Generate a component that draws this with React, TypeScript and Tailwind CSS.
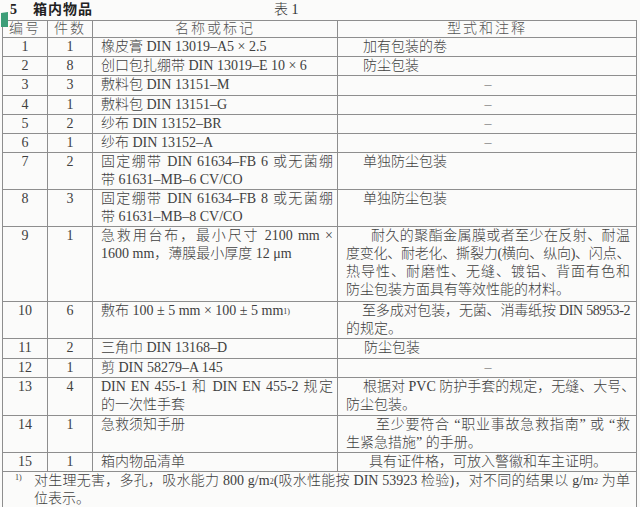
import React from "react";

type Line = { t: React.ReactNode; j?: boolean; indent?: number; tight?: boolean };

const J = ({ lines, lh = 18 }: { lines: Line[]; lh?: number }) => (
  <div>
    {lines.map((l, i) => (
      <div
        key={i}
        className={
          (l.j ? "text-justify [text-align-last:justify] whitespace-nowrap" : "whitespace-nowrap") +
          (l.tight ? " tracking-[-0.4px]" : "")
        }
        style={{ lineHeight: `${lh}px`, paddingLeft: l.indent ?? 0 }}
      >
        {l.t}
      </div>
    ))}
  </div>
);

type Row = {
  no: string;
  qty: string;
  h: number;
  name: Line[];
  note: Line[] | "dash";
};

const Sup = ({ children }: { children: React.ReactNode }) => (
  <sup className="text-[8px] leading-none relative -top-[1px]">{children}</sup>
);

const rows: Row[] = [
  { no: "1", qty: "1", h: 19, name: [{ t: "橡皮膏 DIN 13019–A5 × 2.5" }], note: [{ t: "加有包装的卷", indent: 17 }] },
  { no: "2", qty: "8", h: 19, name: [{ t: "创口包扎绷带 DIN 13019–E 10 × 6" }], note: [{ t: "防尘包装", indent: 17 }] },
  { no: "3", qty: "3", h: 20, name: [{ t: "敷料包 DIN 13151–M" }], note: "dash" },
  { no: "4", qty: "1", h: 19, name: [{ t: "敷料包 DIN 13151–G" }], note: "dash" },
  { no: "5", qty: "2", h: 19, name: [{ t: "纱布 DIN 13152–BR" }], note: "dash" },
  { no: "6", qty: "1", h: 18, name: [{ t: "纱布 DIN 13152–A" }], note: "dash" },
  {
    no: "7",
    qty: "2",
    h: 37,
    name: [{ t: "固定绷带 DIN 61634–FB 6 或无菌绷", j: true }, { t: "带 61631–MB–6 CV/CO" }],
    note: [{ t: "单独防尘包装", indent: 17 }],
  },
  {
    no: "8",
    qty: "3",
    h: 36,
    name: [{ t: "固定绷带 DIN 61634–FB 8 或无菌绷", j: true }, { t: "带 61631–MB–8 CV/CO" }],
    note: [{ t: "单独防尘包装", indent: 17 }],
  },
  {
    no: "9",
    qty: "1",
    h: 75,
    name: [{ t: "急救用台布，最小尺寸 2100 mm ×", j: true }, { t: "1600 mm，薄膜最小厚度 12 μm" }],
    note: [
      { t: "耐久的聚酯金属膜或者至少在反射、耐温", j: true, indent: 25 },
      { t: "度变化、耐老化、撕裂力(横向、纵向)、闪点、", j: true, tight: true },
      { t: "热导性、耐磨性、无缝、镀铝、背面有色和", j: true },
      { t: "防尘包装方面具有等效性能的材料。" },
    ],
  },
  {
    no: "10",
    qty: "6",
    h: 37,
    name: [
      {
        t: (
          <>
            敷布 100 ± 5 mm × 100 ± 5 mm<Sup>1)</Sup>
          </>
        ),
      },
    ],
    note: [{ t: "至多成对包装，无菌、消毒纸按 DIN 58953-2", j: true, indent: 16, tight: true }, { t: "的规定。" }],
  },
  { no: "11", qty: "2", h: 20, name: [{ t: "三角巾 DIN 13168–D" }], note: [{ t: "防尘包装", indent: 18 }] },
  { no: "12", qty: "1", h: 18, name: [{ t: "剪 DIN 58279–A 145" }], note: "dash" },
  {
    no: "13",
    qty: "4",
    h: 38,
    name: [{ t: "DIN EN 455-1 和 DIN EN 455-2 规定", j: true }, { t: "的一次性手套" }],
    note: [{ t: "根据对 PVC 防护手套的规定，无缝、大号、", j: true, indent: 17 }, { t: "防尘包装。" }],
  },
  {
    no: "14",
    qty: "1",
    h: 37,
    name: [{ t: "急救须知手册" }],
    note: [{ t: "至少要符合 “职业事故急救指南” 或 “救", j: true, indent: 30 }, { t: "生紧急措施” 的手册。" }],
  },
  { no: "15", qty: "1", h: 17, name: [{ t: "箱内物品清单" }], note: [{ t: "具有证件格，可放入警徽和车主证明。", indent: 23 }] },
];

const cell = "border border-[#8e8e8e] align-top p-0";

export default function App() {
  return (
    <div
      lang="zh-CN"
      className="relative w-[640px] h-[507px] overflow-hidden bg-[#fbfbfa] text-[#404040] text-[14px] font-light font-['Liberation_Serif','Noto_Sans_CJK_SC',serif]"
    >
      <svg className="absolute left-0 top-[12px]" width="9" height="16" viewBox="0 0 9 16">
        <polygon points="1,1 8,0 8,15 1,15" fill="#3d9e78" />
      </svg>
      <div className="flex items-center h-[20px] pl-[10px] leading-[20px]">
        <span className="font-bold w-[23px] text-[#222]">5</span>
        <span className="font-bold tracking-[1px] text-[#222]">箱内物品</span>
        <span className="ml-[181px] text-[#333]">表 1</span>
      </div>
      <table className="ml-[2px] w-[634px] table-fixed border-collapse border border-[#8e8e8e]">
        <colgroup>
          <col style={{ width: 45 }} />
          <col style={{ width: 45 }} />
          <col style={{ width: 245 }} />
          <col style={{ width: 299 }} />
        </colgroup>
        <tbody>
          <tr style={{ height: 17 }}>
            <td className={`${cell} text-center leading-[16px] text-[#555] tracking-[2px]`}>编号</td>
            <td className={`${cell} text-center leading-[16px] text-[#555] tracking-[2px]`}>件数</td>
            <td className={`${cell} text-center leading-[16px] text-[#555] tracking-[2px]`}>名称或标记</td>
            <td className={`${cell} text-center leading-[16px] text-[#555] tracking-[2px]`}>型式和注释</td>
          </tr>
          {rows.map((r) => (
            <tr key={r.no} style={{ height: r.h }}>
              <td className={`${cell} text-center leading-[18px]`}>{r.no}</td>
              <td className={`${cell} text-center leading-[18px]`}>{r.qty}</td>
              <td className={`${cell} pl-[8px] pr-[4px]`}>
                <J lines={r.name} />
              </td>
              <td className={`${cell} pl-[8px] pr-[6px]`}>
                {r.note === "dash" ? (
                  <div className="text-center leading-[18px] text-[#888]">–</div>
                ) : (
                  <J lines={r.note} />
                )}
              </td>
            </tr>
          ))}
          <tr style={{ height: 36 }}>
            <td colSpan={4} className={`${cell}`}>
              <div className="flex">
                <span className="w-[31px] pl-[12px] text-[8px] leading-[12px]">1)</span>
                <div className="flex-1 pr-[6px]">
                  <div className="text-justify [text-align-last:justify] whitespace-nowrap leading-[18px]">
                    对生理无害，多孔，吸水能力 800 g/m<Sup>2</Sup>(吸水性能按 DIN 53923 检验)，对不同的结果以 g/m
                    <Sup>2</Sup> 为单
                  </div>
                  <div className="leading-[17px]">位表示。</div>
                </div>
              </div>
            </td>
          </tr>
        </tbody>
      </table>
    </div>
  );
}
